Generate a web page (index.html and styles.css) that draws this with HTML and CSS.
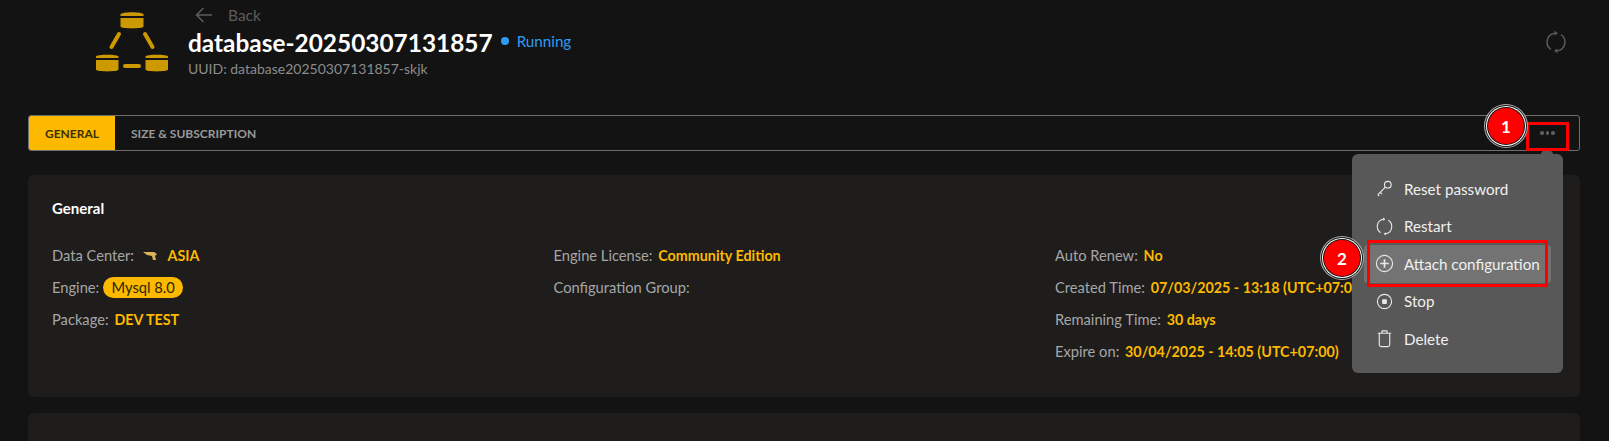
FILE: index.html
```html
<!DOCTYPE html>
<html lang="en">
<head>
<meta charset="utf-8">
<title>database-20250307131857</title>
<link rel="stylesheet" href="styles.css">
</head>
<body>
<div class="page">
  <header class="head">
    <svg class="logo" viewBox="0 0 74 64" aria-hidden="true">
      <g fill="#cc9900">
        <path d="M24.500 4.500C24.500 1.500 47.500 1.500 47.500 4.500V6H24.500Z"/><path d="M24.500 8H47.500V16.500C47.500 19 24.500 19 24.500 16.500Z"/>
        <path d="M0 46.500C0 44 22.500 44 22.500 46.500V48H0Z"/><path d="M0 50H22.500V59.500C22.500 62 0 62 0 59.500Z"/>
        <path d="M49.500 46.500C49.500 44 72 44 72 46.500V48H49.500Z"/><path d="M49.500 50H72V59.500C72 62 49.500 62 49.500 59.500Z"/>
      </g>
      <g stroke="#cc9900" stroke-width="4" stroke-linecap="round">
        <path d="M23 24L15.500 37"/><path d="M49 24L56.500 37"/><path d="M29 56H43"/>
      </g>
    </svg>
    <div class="head-main">
      <div class="back">
        <svg class="back-arrow" viewBox="0 0 18 16" aria-hidden="true"><path d="M17 8H1.500M8.500 1L1.500 8L8.500 15"/></svg>
        <span>Back</span>
      </div>
      <div class="title-row">
        <h1 class="title">database-20250307131857</h1>
        <span class="status"><i class="dot"></i>Running</span>
      </div>
      <div class="uuid">UUID: database20250307131857-skjk</div>
    </div>
    <svg class="refresh" viewBox="0 0 24 24" aria-hidden="true">
      <path d="M7 19.500A9 9 0 0 1 10.500 3.200M17 4.500A9 9 0 0 1 13.500 20.800"/>
      <path class="solid" d="M10.500 0.800L14 3.200L10.500 5.600ZM13.500 18.400L10 20.800L13.500 23.200Z"/>
    </svg>
  </header>

  <nav class="tabs">
    <a class="tab tab-active">GENERAL</a>
    <a class="tab">SIZE &amp; SUBSCRIPTION</a>
    <span class="more"><i></i><i></i><i></i></span>
  </nav>

  <section class="card card-general">
    <h2 class="card-title">General</h2>
    <div class="grid">
      <div class="col">
        <div class="row">Data Center: <svg class="flag" viewBox="0 0 14 10" aria-hidden="true"><path fill="#d9b35a" d="M0 1H11L14 3L12 5L13 9L10 9L9 5L4 4Z"/></svg> <b>ASIA</b></div>
        <div class="row">Engine: <span class="pill">Mysql 8.0</span></div>
        <div class="row">Package: <b>DEV TEST</b></div>
      </div>
      <div class="col">
        <div class="row">Engine License: <b>Community Edition</b></div>
        <div class="row">Configuration Group:</div>
      </div>
      <div class="col">
        <div class="row">Auto Renew: <b>No</b></div>
        <div class="row">Created Time: <b>07/03/2025 - 13:18 (UTC+07:00)</b></div>
        <div class="row">Remaining Time: <b>30 days</b></div>
        <div class="row">Expire on: <b>30/04/2025 - 14:05 (UTC+07:00)</b></div>
      </div>
    </div>
  </section>
  <section class="card card-next"></section>
</div>

<div class="menu">
  <div class="item">
    <svg viewBox="0 0 20 20" aria-hidden="true"><circle cx="13.500" cy="6" r="3.500"/><path d="M11 8.500L3 16.500M5.500 14L7.500 16M3 16.500L4.500 18"/></svg>
    Reset password
  </div>
  <div class="item">
    <svg viewBox="0 0 20 20" aria-hidden="true"><path d="M6 16.500A7.800 7.800 0 0 1 8.500 2.300M14 3.500A7.800 7.800 0 0 1 11.500 17.700"/><path class="solid" d="M8.500 0.500L11 2.300L8.500 4ZM11.500 16L9 17.700L11.500 19.500Z"/></svg>
    Restart
  </div>
  <div class="item item-hover">
    <svg viewBox="0 0 20 20" aria-hidden="true"><circle cx="10" cy="10" r="8.500"/><path class="thick" d="M10 5.500V14.500M5.500 10H14.500"/></svg>
    Attach configuration
  </div>
  <div class="item">
    <svg viewBox="0 0 20 20" aria-hidden="true"><circle cx="10" cy="10" r="7.500"/><rect class="solid" x="7.500" y="7.500" width="5" height="5" rx="1"/></svg>
    Stop
  </div>
  <div class="item">
    <svg viewBox="0 0 20 20" aria-hidden="true"><path d="M3 4.500H17M7 4.500L7.500 2H12.500L13 4.500M4.500 4.500V16.500Q4.500 18.500 6.500 18.500H13.500Q15.500 18.500 15.500 16.500V4.500"/></svg>
    Delete
  </div>
</div>

<div class="mark mark-more"></div>
<div class="mark mark-item"></div>
<div class="badge badge-1">1</div>
<div class="badge badge-2">2</div>
</body>
</html>
```
FILE: styles.css
```css
* { box-sizing: border-box; }
html, body { margin: 0; height: 441px; overflow: hidden; }
body {
  background: #131313;
  color: #a6a6a6;
  font-family: "Lato", "Open Sans", sans-serif;
  font-size: 14.700px;
  position: relative;
}
.page { padding: 0 29px 0 28px; height: 441px; overflow: hidden; }

.head { display: flex; align-items: flex-start; height: 115px; padding: 10px 8px 0 68px; }
.logo { width: 74px; height: 64px; flex: none; }
.head-main { margin-left: 18px; flex: 1; margin-top: -7px; }
.back { display: flex; align-items: center; gap: 15px; color: #5c5c5c; font-size: 15.500px; padding-left: 7px; height: 24px; }
.back-arrow { width: 18px; height: 16px; fill: none; stroke: #5c5c5c; stroke-width: 1.500; }
.title-row { display: flex; align-items: center; gap: 8px; height: 31px; }
.title { margin: 0; color: #fff; font-size: 24.400px; font-weight: 700; }
.status { display: flex; align-items: center; gap: 8px; color: #2f9bf4; font-size: 15.200px; margin-top: -4px; }
.dot { width: 8px; height: 8px; border-radius: 50%; background: #2f9bf4; }
.uuid { color: #8c8c8c; font-size: 14px; margin-top: 2px; }
.refresh { width: 24px; height: 24px; margin: 20px 4px 0 0; fill: none; stroke: #5c5c5c; stroke-width: 1.500; }
.refresh .solid { fill: #5c5c5c; stroke: none; }

.tabs { display: flex; align-items: stretch; height: 36px; border: 1px solid #6e6e6e; border-radius: 3px; }
.tab { display: flex; align-items: center; padding: 0 16px; font-size: 12px; font-weight: 700; color: #9a9a9a; }
.tab-active { width: 86px; background: #fcb900; color: #3a3000; border-radius: 2px 0 0 2px; }
.more { margin-left: auto; width: 41px; display: flex; align-items: center; justify-content: center; gap: 2px; margin-right: 11px; }
.more i { width: 3.500px; height: 3.500px; border-radius: 50%; background: #5e5e5e; }

.card { background: #1e1d1c; border-radius: 6px; }
.card-general { height: 222px; margin-top: 24px; padding: 24px 24px; }
.card-next { height: 60px; margin-top: 16px; }
.card-title { margin: 0; color: #fff; font-size: 15px; font-weight: 700; line-height: 18px; }
.grid { display: grid; grid-template-columns: repeat(3, 501.500px); margin-top: 28px; }
.row { height: 32px; line-height: 20px; white-space: nowrap; }
.row b { color: #fcb900; font-weight: 700; font-size: 14.300px; margin-left: 2px; }
.flag { width: 14px; height: 10px; margin: 0 5px 0 5px; }
.pill { display: inline-block; padding: 0 8.500px; height: 21px; line-height: 21px; background: #fcb900; color: #2d2600; border-radius: 11px; }

.menu { position: absolute; left: 1352px; top: 154px; width: 211px; height: 219px; padding: 16px 12px 0; background: #585858; border-radius: 6px; }
.menu::before { content: ""; position: absolute; right: 10px; top: -4px; width: 12px; height: 8px; border-radius: 50% 50% 0 0; background: #585858; }
.item { display: flex; align-items: center; gap: 10px; height: 37.500px; padding-left: 11px; color: #f0f0f0; font-size: 15.200px; border-radius: 4px; }
.item svg { width: 19px; height: 19px; flex: none; fill: none; stroke: #e8e8e8; stroke-width: 1.200; }
.item .solid { fill: #e8e8e8; stroke: none; }
.item .thick { stroke-width: 1.800; }
.item-hover { background: #737373; }

.mark { position: absolute; border: 3px solid #f00; }
.mark-more { left: 1526px; top: 122px; width: 43px; height: 29px; }
.mark-item { left: 1367px; top: 240px; width: 181px; height: 47px; }
.badge { position: absolute; width: 36px; height: 36px; border-radius: 50%; background: #f00; color: #fff; font-weight: 700; font-size: 17px; display: flex; align-items: center; justify-content: center; box-shadow: 0 0 0 1px #131313, 0 0 0 2px #fff, 0 0 0 3px #131313, 0 0 0 4px #aaa; }
.badge-1 { left: 1488px; top: 108px; }
.badge-2 { left: 1324px; top: 240px; }
```
